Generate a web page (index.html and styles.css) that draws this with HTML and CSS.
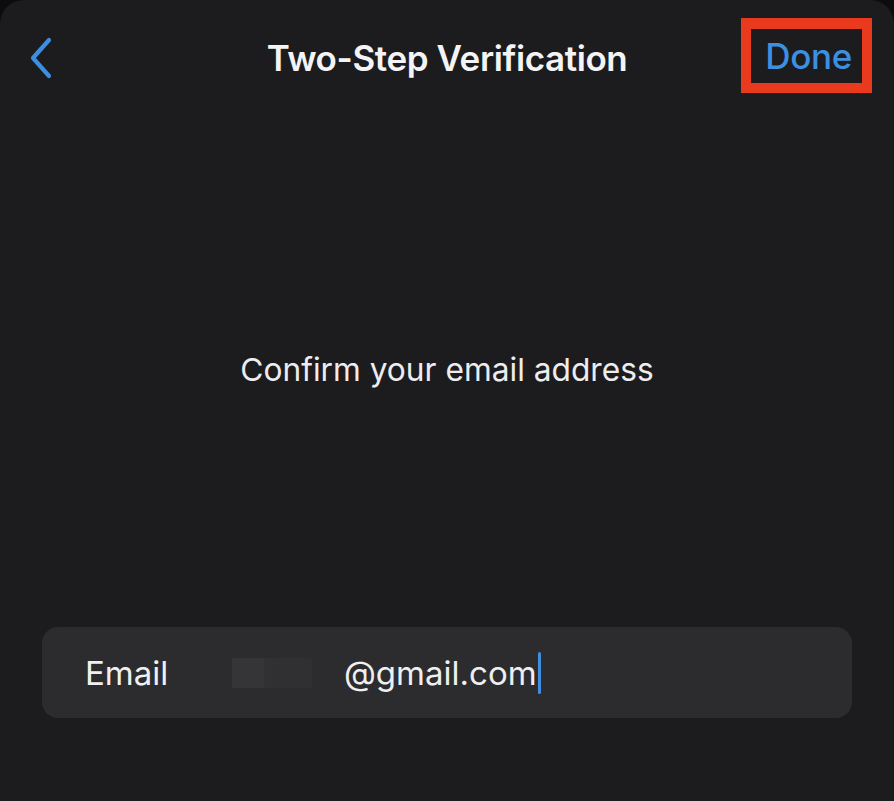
FILE: index.html
```html
<!DOCTYPE html>
<html lang="en">
<head>
    <meta charset="UTF-8">
    <meta name="viewport" content="width=device-width, initial-scale=1.0">
    <title>Two-Step Verification</title>
    <link rel="stylesheet" href="styles.css">
</head>
<body>
    <div class="screen">
        <div class="nav-bar">
            <button class="back-btn" aria-label="Back">
                <svg width="26" height="44" viewBox="0 0 26 44">
                    <path d="M21 4 L5 22 L21 40" fill="none" stroke="#3b8ee0" stroke-width="4.2" stroke-linecap="round" stroke-linejoin="round"/>
                </svg>
            </button>
            <h1 class="nav-title">Two-Step Verification</h1>
            <button class="done-btn">Done</button>
        </div>

        <p class="prompt">Confirm your email address</p>

        <div class="email-field">
            <span class="field-label">Email</span>
            <span class="field-value">
                <span class="blurred"></span>
                <span class="domain">@gmail.com</span><span class="caret"></span>
            </span>
        </div>
    </div>
</body>
</html>
```

FILE: styles.css
```css
body {
    margin: 0;
    padding: 0;
    background-color: #0c0c0e;
    font-family: Inter, "Noto Sans", "Liberation Sans", sans-serif;
    color: #f2f2f4;
}

.screen {
    height: 801px;
    background-color: #1c1c1e;
    border-radius: 24px 24px 0 0;
    display: flex;
    flex-direction: column;
}

/* top navigation */
.nav-bar {
    display: flex;
    align-items: center;
    justify-content: space-between;
    height: 118px;
    padding: 0 22px 0 28px;
    box-sizing: border-box;
    position: relative;
}

.back-btn {
    background: none;
    border: none;
    padding: 0;
    margin-top: -2px;
    display: flex;
}

.nav-title {
    position: absolute;
    left: 0;
    right: 0;
    text-align: center;
    margin: 0;
    margin-top: -2px;
    font-size: 35px;
    font-weight: 600;
    letter-spacing: -0.4px;
    color: #f4f4f6;
    pointer-events: none;
}

.done-btn {
    position: relative;
    z-index: 1;
    background: none;
    font-family: inherit;
    font-size: 35px;
    font-weight: 500;
    letter-spacing: -0.3px;
    line-height: 42px;
    color: #3d8fe0;
    border: 10px solid #ea3a1d;
    border-top-width: 11px;
    padding: 6px 10px 6px 14px;
    margin-top: -7px;
}

.prompt {
    margin: 232px 0 0;
    text-align: center;
    font-size: 31.7px;
    font-weight: 400;
    color: #ededef;
}

/* email input row */
.email-field {
    margin: 238px 42px 0 42px;
    height: 91px;
    background-color: #2c2c2e;
    border-radius: 16px;
    display: flex;
    align-items: center;
    padding: 0 43px;
    font-size: 33px;
}

.field-label {
    width: 147px;
    color: #f0f0f2;
}

.field-value {
    display: flex;
    align-items: center;
}

.blurred {
    width: 80px;
    height: 30px;
    margin-right: 32px;
    background: linear-gradient(90deg, #353538 0%, #353538 38%, #313134 42%, #303033 100%);
    border-radius: 2px;
}

.domain {
    color: #efeff1;
}

.caret {
    width: 3px;
    height: 42px;
    margin-left: 1px;
    background-color: #3d8fe0;
    border-radius: 2px;
}
```
